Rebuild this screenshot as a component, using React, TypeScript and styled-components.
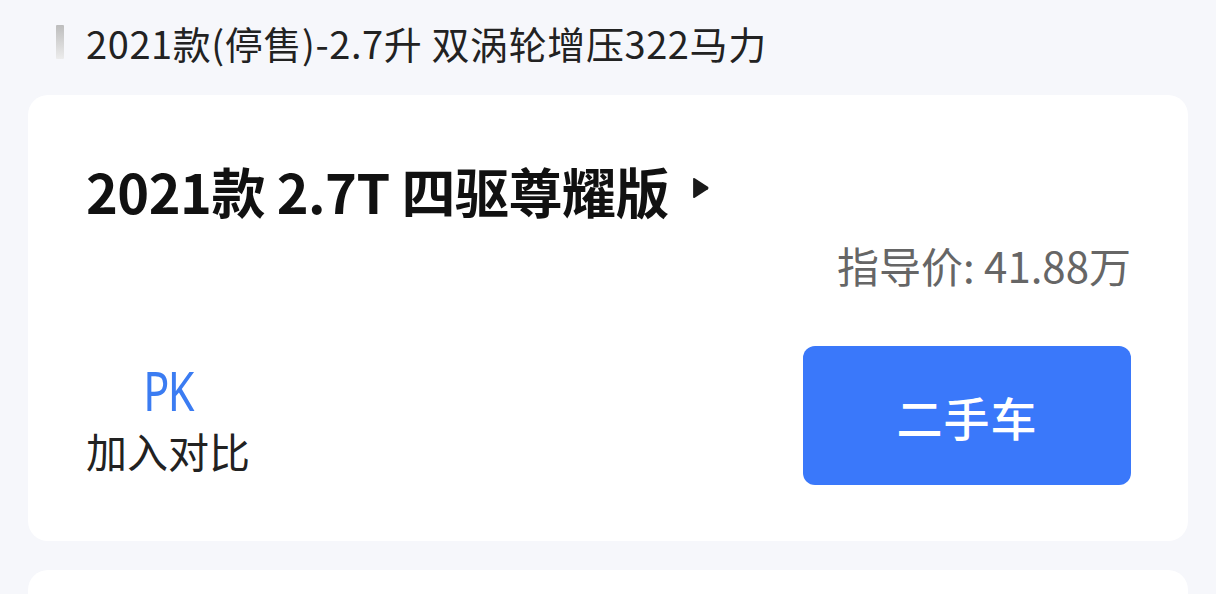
import styled, { createGlobalStyle } from 'styled-components';

const GlobalStyle = createGlobalStyle`
  html, body {
    margin: 0;
    padding: 0;
    background: #f6f7fb;
    font-family: 'Noto Sans CJK SC', 'Noto Sans', sans-serif;
  }
`;

export default function App() {
  return (
    <Page>
      <GlobalStyle />
      <SectionHeader>
        <HeaderBar />
        <HeaderTitle>2021款(停售)-2.7升 双涡轮增压322马力</HeaderTitle>
      </SectionHeader>
      <Card>
        <TrimTitle>
          2021款 2.7T 四驱尊耀版
          <Arrow viewBox='0 0 18 22'>
            <path d='M2 2.5 Q2 0.8 3.6 1.8 L16 9.8 Q17.4 11 16 12.2 L3.6 20.2 Q2 21.2 2 19.5 Z' fill='#1a1a1a' />
          </Arrow>
        </TrimTitle>
        <PriceRow>指导价: 41.88万</PriceRow>
        <ActionRow>
          <CompareButton>
            <PkMark>PK</PkMark>
            <CompareLabel>加入对比</CompareLabel>
          </CompareButton>
          <UsedCarButton>二手车</UsedCarButton>
        </ActionRow>
      </Card>
      <Card $peek />
    </Page>
  );
}

const Page = styled.div`
  padding: 0 28px;
  display: flex;
  flex-direction: column;
  height: 594px;
  overflow: hidden;
`;

const SectionHeader = styled.div`
  display: flex;
  align-items: center;
  gap: 22px;
  height: 95px;
  flex-shrink: 0;
  padding: 0 0 10px 28px;
  box-sizing: border-box;
`;

const HeaderBar = styled.div`
  width: 8px;
  height: 34px;
  margin-top: -2px;
  border-radius: 1px;
  background: linear-gradient(180deg, #bdbdbd 0%, #ececec 100%);
`;

const HeaderTitle = styled.div`
  font-size: 38px;
  line-height: 48px;
  color: #222;
  letter-spacing: 0.6px;
`;

const Card = styled.div<{ $peek?: boolean }>`
  background: #fff;
  border-radius: 20px;
  padding: 66px 57px 56px 58px;
  margin-bottom: 29px;
  display: flex;
  flex-direction: column;
  flex-shrink: 0;
  ${({ $peek }) => ($peek ? 'height: 200px; padding: 0;' : '')}
`;

const TrimTitle = styled.div`
  display: flex;
  align-items: center;
  font-size: 54px;
  line-height: 60px;
  font-weight: 600;
  color: #111;
  letter-spacing: -0.5px;
`;

const Arrow = styled.svg`
  width: 19px;
  height: 24px;
  margin-left: 22px;
  margin-top: -6px;
`;

const PriceRow = styled.div`
  margin-top: 22px;
  text-align: right;
  font-size: 42px;
  line-height: 44px;
  color: #666;
`;

const ActionRow = styled.div`
  margin-top: 59px;
  display: flex;
  justify-content: space-between;
  align-items: flex-start;
`;

const CompareButton = styled.div`
  display: flex;
  flex-direction: column;
  align-items: center;
  padding-top: 18px;
`;

const PkMark = styled.div`
  font-family: 'Noto Sans', sans-serif;
  font-size: 54px;
  line-height: 52px;
  color: #3b7cf2;
  letter-spacing: -2px;
  transform: scaleX(0.8);
`;

const CompareLabel = styled.div`
  margin-top: 10px;
  font-size: 41px;
  line-height: 48px;
  color: #222;
`;

const UsedCarButton = styled.button`
  width: 328px;
  height: 139px;
  border: none;
  border-radius: 12px;
  background: #3a78fa;
  color: #fff;
  font-family: 'Noto Sans CJK SC', sans-serif;
  font-size: 46px;
  font-weight: 500;
  letter-spacing: 1px;
  cursor: pointer;
`;
